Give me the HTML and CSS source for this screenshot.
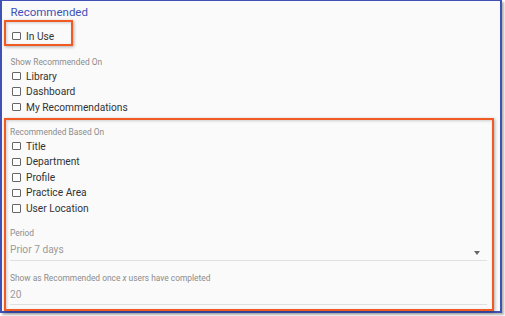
FILE: index.html
```html
<!DOCTYPE html>
<html>
<head>
<meta charset="utf-8">
<link rel="stylesheet" href="styles.css">
</head>
<body>
<div class="frame">
  <div class="heading">Recommended</div>
  <div class="mark mark-inuse">
    <label class="check"><span class="box"></span><span>In Use</span></label>
  </div>
  <div class="label label-show">Show Recommended On</div>
  <label class="check"><span class="box"></span><span>Library</span></label>
  <label class="check"><span class="box"></span><span>Dashboard</span></label>
  <label class="check"><span class="box"></span><span>My Recommendations</span></label>
  <div class="mark mark-based">
    <div class="label label-based">Recommended Based On</div>
    <label class="check"><span class="box"></span><span>Title</span></label>
    <label class="check"><span class="box"></span><span>Department</span></label>
    <label class="check"><span class="box"></span><span>Profile</span></label>
    <label class="check"><span class="box"></span><span>Practice Area</span></label>
    <label class="check"><span class="box"></span><span>User Location</span></label>
    <div class="label label-period">Period</div>
    <div class="field">
      <span class="value">Prior 7 days</span>
      <span class="arrow"></span>
    </div>
    <div class="label label-once">Show as Recommended once <i>x</i> users have completed</div>
    <div class="field">
      <span class="value">20</span>
    </div>
  </div>
</div>
</body>
</html>
```

FILE: styles.css
```css
html, body {
  margin: 0;
  padding: 0;
  background: #ffffff;
}
body {
  font-family: Roboto, "Liberation Sans", Arial, sans-serif;
  width: 505px;
  height: 316px;
  overflow: hidden;
}
.frame {
  box-sizing: border-box;
  width: 502px;
  height: 313px;
  background: #fafafa;
  border: 2px solid #3f51b5;
  border-top-width: 1px;
  box-shadow: 2px 2px 2px rgba(0, 0, 0, 0.3);
  display: flex;
  flex-direction: column;
  padding: 4px 0 0 2px;
}
.heading {
  color: #3f51b5;
  font-size: 11.5px;
  line-height: 15px;
  height: 15px;
  padding-left: 6.5px;
}
.mark {
  border: 2px solid #f15a22;
  box-shadow: 1px 1px 3px rgba(0, 0, 0, 0.3), inset 1px 1px 3px rgba(0, 0, 0, 0.18);
  box-sizing: border-box;
}
.mark-inuse {
  width: 69px;
  height: 26px;
  padding: 8px 0 0 4px;
}
.mark-based {
  margin-top: 3.5px;
  width: 490px;
  height: 193px;
  padding: 6px 5px 0 4px;
  display: flex;
  flex-direction: column;
}
.label {
  color: #8c8c8c;
  font-size: 8.4px;
  line-height: 12px;
  height: 12px;
}
.label-show {
  margin: 10.5px 0 0 6.5px;
}
.label-period {
  margin-top: 11px;
}
.label-once {
  margin-top: 11px;
}
.label i {
  font-style: italic;
}
.check {
  display: flex;
  align-items: center;
  height: 15.6px;
  font-size: 10.2px;
  color: #333333;
  padding-left: 2px;
}
.frame > .check {
  margin-left: 6px;
  height: 15.5px;
}
.mark-inuse .check {
  height: 12px;
}
.box {
  box-sizing: border-box;
  width: 8.5px;
  height: 8.5px;
  border: 1.3px solid #666666;
  border-radius: 1px;
  background: #fdfdfd;
  margin-right: 5.5px;
  flex: none;
}
.field {
  display: flex;
  align-items: flex-end;
  margin-top: 3.5px;
  height: 17px;
  border-bottom: 1.5px solid #e0e0e0;
}
.value {
  flex: 1;
  font-size: 10.2px;
  line-height: 14px;
  color: #9a9a9a;
  padding-bottom: 2.5px;
}
.arrow {
  width: 0;
  height: 0;
  border-left: 3.5px solid transparent;
  border-right: 3.5px solid transparent;
  border-top: 4px solid #666;
  margin: 0 7px 5px 0;
}
```
